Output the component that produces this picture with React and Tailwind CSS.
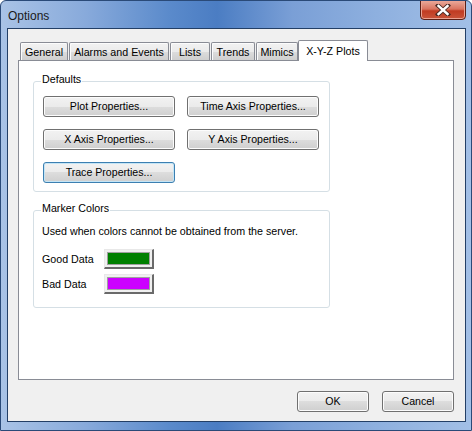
import React from 'react';

const TABS = [
  { label: 'General', w: 'w-[48px]' },
  { label: 'Alarms and Events', w: 'w-[100px]' },
  { label: 'Lists', w: 'w-[40px]' },
  { label: 'Trends', w: 'w-[44px]' },
  { label: 'Mimics', w: 'w-[42px]' },
];

const BTN =
  'h-[21px] border rounded-[3px] text-[10.6px] font-normal text-black flex items-center justify-center bg-[linear-gradient(to_bottom,#f2f2f2_0%,#ebebeb_50%,#dddddd_50%,#cfcfcf_100%)]';

function Button({ children, focused, className = '' }) {
  return (
    <button
      className={`${BTN} ${focused ? 'border-[#3c7fb1] shadow-[inset_0_0_0_1px_#c4e5f6]' : 'border-[#707070] shadow-[inset_0_0_0_1px_#fcfcfc]'} ${className}`}
    >
      {children}
    </button>
  );
}

function GroupBox({ label, className = '', children }) {
  return (
    <div className={`relative border border-[#d5dfe5] rounded-[3px] ${className}`}>
      {/* caption sits over the top border */}
      <span className="absolute left-[7px] -top-[9px] px-[1px] bg-white leading-[13px]">{label}</span>
      {children}
    </div>
  );
}

function Swatch({ color }) {
  return (
    <div className="w-[50px] h-[20px] border-t border-l border-[#e8e8e8] border-r-2 border-b-2 border-r-[#6a6a6a] border-b-[#6a6a6a] p-[2px] bg-[#f0f0f0]">
      <div className={`w-full h-full border border-[#a0a0a0] ${color}`} />
    </div>
  );
}

export default function App() {
  return (
    <div className="w-[472px] h-[431px] flex flex-col rounded-t-[6px] border border-[#2a4a78] bg-[linear-gradient(to_right,#a9c3e6_0%,#88aadb_18%,#5a8acb_36%,#4b7dc3_46%,#7a9fd6_62%,#8eb0df_80%,#a2bfe6_100%)] font-['Liberation_Sans',Arial,sans-serif] text-[10.7px] text-black overflow-hidden">
      {/* Title bar */}
      <div className="h-[27px] flex items-start shrink-0">
        <span className="pl-[7px] pt-[8px] text-[12px] leading-[14px] text-[#1a1a1a]">Options</span>
        <div className="flex-1" />
        <div className="mr-[5px] -mt-px w-[46px] h-[20px] rounded-b-[4px] border border-[#5b1f16] bg-[linear-gradient(to_bottom,#e9a99a_0%,#d9735f_45%,#c03b22_55%,#c9543a_100%)] shadow-[inset_0_0_0_1px_#eba393] flex items-center justify-center">
          <svg width="16" height="12" viewBox="0 0 16 12">
            <path d="M3 1.5 L13 10.5 M13 1.5 L3 10.5" stroke="#4a2a24" strokeWidth="4.2" strokeLinecap="square" />
            <path d="M3.5 2 L12.5 10 M12.5 2 L3.5 10" stroke="#ffffff" strokeWidth="2.4" strokeLinecap="square" />
          </svg>
        </div>
      </div>

      {/* Client area */}
      <div className="ml-[6px] mr-[5px] mb-[8px] flex-1 border border-[#233f66] bg-[#f0f0f0] pl-[10px] pr-[11px] pt-[11px] flex flex-col">
        {/* Tab strip */}
        <div className="h-[20px] flex items-end pl-[2px]">
          {TABS.map((t) => (
            <div
              key={t.label}
              className={`${t.w} h-[18px] mr-px border border-b-0 border-[#898c95] rounded-t-[2px] bg-[linear-gradient(to_bottom,#f2f2f2_0%,#ebebeb_50%,#dddddd_50%,#cfcfcf_100%)] shadow-[inset_1px_1px_0_#fcfcfc] flex items-center justify-center leading-[13px] pt-px`}
            >
              {t.label}
            </div>
          ))}
          <div className="relative z-10 -ml-[1px] w-[70px] h-[21px] -mb-px border border-b-0 border-[#898c95] rounded-t-[2px] bg-white flex items-start justify-center pt-[4px] leading-[13px]">
            X-Y-Z Plots
          </div>
        </div>

        {/* Tab page */}
        <div className="h-[320px] border border-[#898c95] bg-white px-[14px] pt-[20px]">
          <GroupBox label="Defaults" className="w-[297px] pt-[14px] pl-[9px] pb-[8px]">
            <div className="grid grid-cols-[132px_132px] gap-x-[12px] gap-y-[12px]">
              <Button>Plot Properties...</Button>
              <Button>Time Axis Properties...</Button>
              <Button>X Axis Properties...</Button>
              <Button>Y Axis Properties...</Button>
              <Button focused>Trace Properties...</Button>
            </div>
          </GroupBox>

          <GroupBox label="Marker Colors" className="mt-[18px] w-[297px] h-[98px] pt-[14px] pl-[8px]">
            <div className="leading-[13px]">Used when colors cannot be obtained from the server.</div>
            <div className="mt-[11px] flex flex-col gap-[5px]">
              <div className="flex items-center">
                <span className="w-[62px] leading-[13px]">Good Data</span>
                <Swatch color="bg-[#008000]" />
              </div>
              <div className="flex items-center">
                <span className="w-[62px] leading-[13px]">Bad Data</span>
                <Swatch color="bg-[#cc00ff]" />
              </div>
            </div>
          </GroupBox>
        </div>

        {/* Dialog buttons */}
        <div className="mt-[11px] flex justify-end gap-[13px]">
          <Button className="w-[72px]">OK</Button>
          <Button className="w-[72px]">Cancel</Button>
        </div>
      </div>
    </div>
  );
}
